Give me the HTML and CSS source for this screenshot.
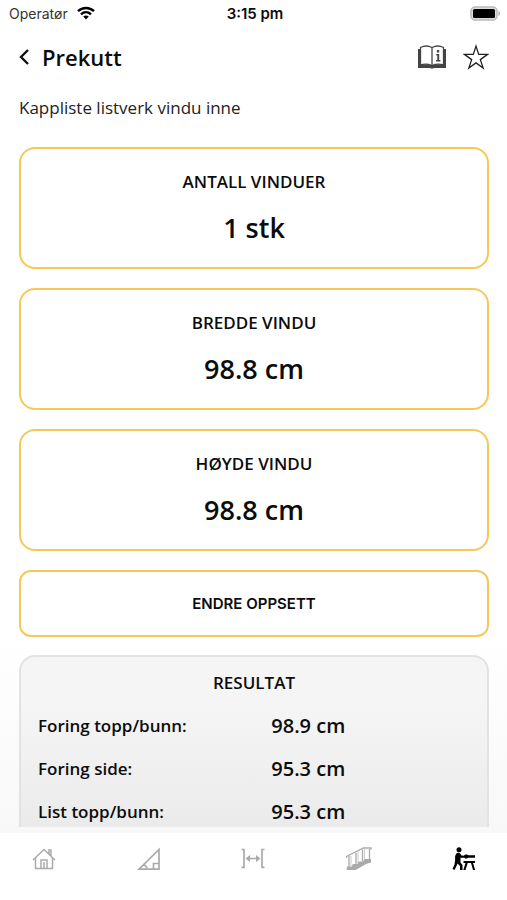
FILE: index.html
```
<!DOCTYPE html>
<html lang="no">

<head>
    <meta charset="UTF-8">
    <title>Prekutt</title>
    <meta name="viewport" content="width=device-width, initial-scale=1.0">
    <link rel="stylesheet" href="styles.css">
</head>

<body>
    <div class="status">
        <div class="carrier">
            <span>Operatør</span>
            <svg width="20" height="14" viewBox="0 0 18 14" fill="none" stroke="#000" stroke-width="2.4">
                <path d="M1 5.2C5.5.9 12.5.9 17 5.2" />
                <path d="M4 8.300c2.900-2.700 7.100-2.700 10 0" />
                <path d="M6.200 10.500c1.600-1.500 4-1.500 5.600 0L9 13.400z" fill="#000" stroke="none" />
            </svg>
        </div>
        <div class="clock">3:15 pm</div>
        <div class="battery">
            <svg width="31" height="15" viewBox="0 0 31 15">
                <rect x="1" y="1" width="26" height="13" rx="4" fill="#ddd" stroke="#bbb" stroke-width="1.500" />
                <rect x="3" y="3" width="22" height="9" rx="1.500" />
                <path d="M28.500 5c2 .8 2 4.200 0 5z" fill="#aaa" />
            </svg>
        </div>
    </div>

    <header>
        <button class="icon-btn" aria-label="Tilbake">
            <svg width="12" height="18" viewBox="0 0 12 18" fill="none" stroke="#111" stroke-width="2.400">
                <path d="M10 2L3 9l7 7" />
            </svg>
        </button>
        <h1>Prekutt</h1>
        <button class="icon-btn" aria-label="Info">
            <svg width="30" height="24" viewBox="0 0 30 24">
                <path d="M1 4h2v16c4-1.200 8-1 12 .6 4-1.600 8-1.800 12-.6V4h2v19H17l-2 .8-2-.8H1z" fill="#444" />
                <path d="M3.500 2.500c3.500-1.800 8-1.800 11.500 0 3.500-1.800 8-1.800 11.500 0v17.300c-4-1-8-.8-11.500.8-3.500-1.600-7.500-1.800-11.500-.8z" fill="#fff" stroke="#444" stroke-width="1.300" />
                <path d="M15 2.500v18" stroke="#444" stroke-width="1.300" />
                <path d="M19.300 9h2.900v6h1.200v1.500h-4.300V15h1.200v-4.500h-1zM19.900 5h2.300v2.400h-2.300z" fill="#444" />
            </svg>
        </button>
        <button class="icon-btn" aria-label="Favoritt">
            <svg width="26" height="26" viewBox="0 0 24 24" fill="none" stroke="#222" stroke-width="1.200">
                <path d="M12 2l2.500 7.600h8.200L16 14.400l2.600 7.800-6.600-4.800-6.600 4.800L8 14.400 1.300 9.600h8.200z" />
            </svg>
        </button>
    </header>

    <main>
        <p class="subtitle">Kappliste listverk vindu inne</p>

        <section class="card">
            <h2>ANTALL VINDUER</h2>
            <div class="value">1 stk</div>
        </section>
        <section class="card">
            <h2>BREDDE VINDU</h2>
            <div class="value">98.8 cm</div>
        </section>
        <section class="card">
            <h2>HØYDE VINDU</h2>
            <div class="value">98.8 cm</div>
        </section>

        <button class="setup">ENDRE OPPSETT</button>

        <section class="result">
            <h2>RESULTAT</h2>
            <table>
                <tr>
                    <th>Foring topp/bunn:</th>
                    <td>98.9 cm</td>
                </tr>
                <tr>
                    <th>Foring side:</th>
                    <td>95.3 cm</td>
                </tr>
                <tr>
                    <th>List topp/bunn:</th>
                    <td>95.3 cm</td>
                </tr>
            </table>
        </section>
    </main>

    <nav>
        <a href="#" aria-label="Hjem">
            <svg width="24" height="24" viewBox="0 0 24 24" fill="none" stroke="#aaa" stroke-width="1.500">
                <path d="M1 13L12 2.500 23 13M3.500 11v10.500h17V11M17 7V3h2v6M9 21.500v-8.500h6v8.500M12 21.500V15" />
            </svg>
        </a>
        <a href="#" aria-label="Vinkel">
            <svg width="24" height="24" viewBox="0 0 24 24" fill="none" stroke="#aaa" stroke-width="1.700">
                <path d="M2 22.200h20V2.500zM6 18.500c2-1 3.800.8 3.800 3.700M16.500 22v-5.500H22" />
            </svg>
        </a>
        <a href="#" aria-label="Avstand">
            <svg width="24" height="24" viewBox="0 0 24 24" fill="none" stroke="#aaa" stroke-width="1.700">
                <path d="M.5 2.500h2.500v17.800H.5M23.500 2.500H21v17.800h2.500M6 11.500h12" />
                <path d="M9 8v7l-4.500-3.500zM15 8v7l4.500-3.500z" fill="#aaa" stroke="none" />
            </svg>
        </a>
        <a href="#" aria-label="Trapp">
            <svg width="26" height="24" viewBox="0 0 26 24" fill="none" stroke="#aaa">
                <path d="M.5 11V9.500L17.500 1H25v1.500M3 9v11M10 6v12M16.500 2.500v12M23.500 2v11" stroke-width="1.300" />
                <path d="M5 9v10M12 5v11M18.500 2v11" stroke-width=".6" />
                <path d="M.8 19.500h5l1-2.500h4.500l1.500-2.500H17l2-2.500h6v3.500l-5 1.500-6 3.500-4.500 2.500H.8z" fill="#aaa" stroke="none" />
            </svg>
        </a>
        <a href="#" aria-label="Prekutt">
            <svg width="24" height="24" viewBox="0 0 24 24">
                <circle cx="7" cy="2.800" r="2.500" />
                <path d="M4.500 6.300c1-1 3-.8 3.600.3l1.400 2 3.500.2v2H8.500v4.700l2 2.500V23H8v-4l-2.500-2.500L4.500 19l-2 4-2-1 2-4.500.6-4V9z" />
                <path d="M12 9.200c0-1 .8-1.700 2-1.700s1.500.7 2.500.7H23v2.500h-7l-1 .8h-2zM11.500 14H23v2H11.500zM13.500 16h2.200L13.500 23h-2.200zM19 16h2l2.200 7H21z" />
            </svg>
        </a>
    </nav>
</body>

</html>
```
FILE: styles.css
```
* {
    box-sizing: border-box;
}

body {
    margin: 0;
    height: 100vh;
    display: flex;
    flex-direction: column;
    overflow: hidden;
    font-family: "Open Sans", sans-serif;
    color: #0c0c0c;
    background: linear-gradient(#fff 70%, #f8f8f8 93%);
}

h1,
h2,
p {
    margin: 0;
}

button {
    font-family: inherit;
    color: inherit;
    cursor: pointer;
}

svg {
    display: block;
}

/* Status bar */
.status {
    display: grid;
    grid-template-columns: 1fr auto 1fr;
    align-items: center;
    height: 26px;
    padding: 0 6px 0 9px;
    font-family: Inter, sans-serif;
    font-size: 14px;
}

.carrier {
    display: flex;
    align-items: center;
    gap: 8px;
    color: #333;
}

.clock {
    font-size: 15px;
    font-weight: 600;
}

.battery {
    justify-self: end;
}

/* Top bar */
header {
    display: flex;
    align-items: center;
    gap: 16px;
    height: 62px;
    padding: 0 18px;
}

header h1 {
    flex: 1;
    margin-left: -4px;
    font-size: 22px;
    font-weight: 600;
}

.icon-btn {
    padding: 0;
    border: none;
    background: none;
}

/* Scrolling content */
main {
    flex: 1;
    min-height: 0;
    overflow: hidden;
    padding: 8px 18px 0 19px;
    margin-bottom: 6px;
}

.subtitle {
    margin-bottom: 27px;
    font-size: 17px;
    line-height: 24px;
    color: #222;
}

h2 {
    font-size: 17px;
    font-weight: 600;
    line-height: 24px;
    text-align: center;
}

.card {
    height: 122px;
    margin-bottom: 19px;
    padding-top: 21px;
    border: 2px solid #f5c858;
    border-radius: 16px;
    background: #fff;
}

.value {
    margin-top: 16px;
    font-size: 27px;
    font-weight: 600;
    line-height: 36px;
    text-align: center;
}

.setup {
    display: block;
    width: 100%;
    height: 67px;
    margin-bottom: 18px;
    border: 2px solid #f5c858;
    border-radius: 12px;
    background: #fff;
    font-family: Inter, sans-serif;
    font-size: 15px;
    font-weight: 600;
}

.result {
    padding: 14px 17px 60px;
    border: 2px solid #e2e2e2;
    border-radius: 16px;
    background: linear-gradient(#f5f5f5 20%, #e5e5e5);
}

table {
    width: 100%;
    margin-top: 9px;
    border-collapse: collapse;
    table-layout: fixed;
}

th,
td {
    height: 43px;
    padding: 0;
    font-weight: 600;
    text-align: left;
}

th {
    width: 54%;
    font-size: 17px;
}

td {
    font-size: 20px;
}

/* Bottom navigation */
nav {
    display: flex;
    justify-content: space-between;
    height: 67px;
    padding: 14px 31px 0 32px;
    background: #fff;
}
```
